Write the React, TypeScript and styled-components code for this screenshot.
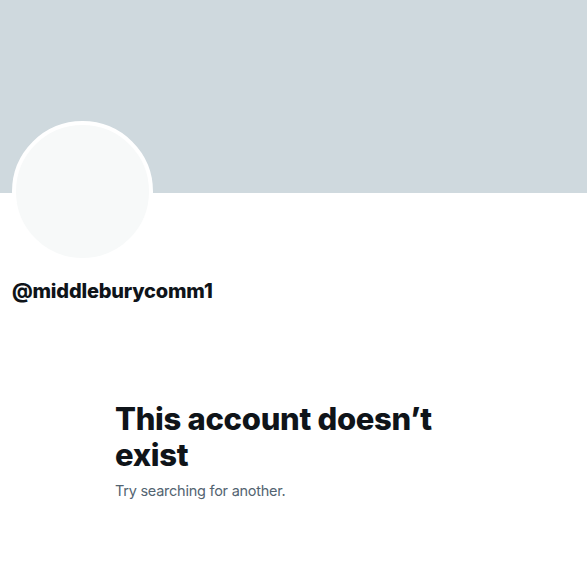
import React from 'react';
import styled, { createGlobalStyle } from 'styled-components';

const GlobalStyle = createGlobalStyle`
  html, body {
    margin: 0;
    padding: 0;
    background: #ffffff;
  }
  body {
    font-family: Inter, "Noto Sans", "Liberation Sans", sans-serif;
    color: #0f1419;
  }
`;

const Page = styled.div`
  width: 587px;
  min-height: 564px;
  background: #ffffff;
  overflow: hidden;
`;

const Banner = styled.div`
  height: 193px;
  background-color: #cfd9de;
`;

const ProfileHeader = styled.div`
  padding: 0 12px;
  display: flex;
  flex-direction: column;
  align-items: flex-start;
`;

const Avatar = styled.div`
  width: 133px;
  height: 133px;
  margin-top: -72px;
  border-radius: 50%;
  border: 4px solid #ffffff;
  background-color: #f7f9f9;
`;

const Handle = styled.div`
  margin-top: 17px;
  font-size: 20px;
  line-height: 24px;
  font-weight: 800;
  letter-spacing: -0.2px;
  color: #0f1419;
`;

const EmptyState = styled.div`
  width: 357px;
  margin: 98px auto 0;
  display: flex;
  flex-direction: column;
`;

const Title = styled.h1`
  margin: 0;
  font-size: 31px;
  line-height: 36px;
  font-weight: 800;
  letter-spacing: -0.3px;
  color: #0f1419;
`;

const Subtitle = styled.p`
  margin: 8px 0 0;
  font-size: 14.5px;
  line-height: 20px;
  font-weight: 400;
  letter-spacing: -0.25px;
  color: #536471;
`;

export default function App() {
  return (
    <Page>
      <GlobalStyle />
      <Banner />
      <ProfileHeader>
        <Avatar />
        <Handle>@middleburycomm1</Handle>
      </ProfileHeader>
      <EmptyState>
        <Title>This account doesn’t exist</Title>
        <Subtitle>Try searching for another.</Subtitle>
      </EmptyState>
    </Page>
  );
}
